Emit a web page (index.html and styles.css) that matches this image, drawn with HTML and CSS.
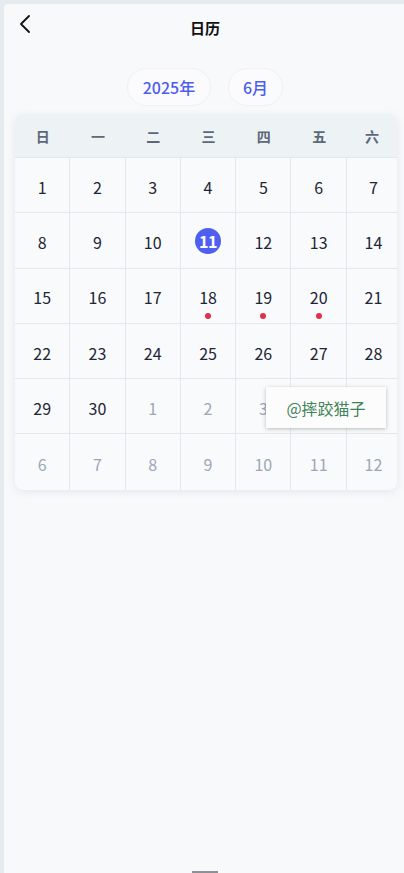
FILE: index.html
```html
<!DOCTYPE html>
<html lang="zh">
<head>
<meta charset="utf-8">
<title>日历</title>
<link rel="stylesheet" href="styles.css">
</head>
<body>
<div class="app">
  <header class="topbar">
    <svg class="back" width="14" height="20" viewBox="0 0 14 20"><path d="M11 2 L3 10 L11 18" fill="none" stroke="#111" stroke-width="1.8" stroke-linecap="round" stroke-linejoin="round"/></svg>
    <h1 class="title">日历</h1>
  </header>
  <div class="pickers">
    <span class="pill pill-year">2025年</span>
    <span class="pill pill-month">6月</span>
  </div>
  <div class="card">
    <div class="week">
      <span>日</span><span>一</span><span>二</span><span>三</span><span>四</span><span>五</span><span>六</span>
    </div>
    <div class="grid">
      <div class="cell">1</div><div class="cell">2</div><div class="cell">3</div><div class="cell">4</div><div class="cell">5</div><div class="cell">6</div><div class="cell">7</div>
      <div class="cell">8</div><div class="cell">9</div><div class="cell">10</div><div class="cell"><span class="today">11</span></div><div class="cell">12</div><div class="cell">13</div><div class="cell">14</div>
      <div class="cell">15</div><div class="cell">16</div><div class="cell">17</div><div class="cell dot">18</div><div class="cell dot">19</div><div class="cell dot">20</div><div class="cell">21</div>
      <div class="cell">22</div><div class="cell">23</div><div class="cell">24</div><div class="cell">25</div><div class="cell">26</div><div class="cell">27</div><div class="cell">28</div>
      <div class="cell">29</div><div class="cell">30</div><div class="cell muted">1</div><div class="cell muted">2</div><div class="cell muted">3</div><div class="cell muted">4</div><div class="cell muted">5</div>
      <div class="cell muted">6</div><div class="cell muted">7</div><div class="cell muted">8</div><div class="cell muted">9</div><div class="cell muted">10</div><div class="cell muted">11</div><div class="cell muted">12</div>
    </div>
    <div class="watermark">@摔跤猫子</div>
  </div>
  <div class="home-bar"></div>
</div>
</body>
</html>
```
FILE: styles.css
```css
* { box-sizing: border-box; }
html, body { margin: 0; padding: 0; }
body {
  background: #e5ebef;
  padding: 4px 0 0 4px;
  font-family: "Noto Sans CJK SC", "Noto Sans", sans-serif;
  width: 404px;
  height: 873px;
  overflow: hidden;
}
.app {
  background: #f8f9fb;
  height: 869px;
  border-top-left-radius: 4px;
  display: flex;
  flex-direction: column;
  position: relative;
}
.topbar {
  height: 44px;
  display: flex;
  align-items: center;
  justify-content: center;
  position: relative;
}
.back {
  position: absolute;
  left: 14px;
  top: 10px;
}
.title {
  margin: 0;
  font-size: 15px;
  font-weight: 700;
  color: #111;
  padding-top: 2px;
  padding-left: 2px;
}
.pickers {
  display: flex;
  justify-content: center;
  gap: 17px;
  margin-top: 20px;
  padding-left: 2px;
}
.pill {
  height: 38px;
  display: flex;
  align-items: center;
  justify-content: center;
  border-radius: 19px;
  background: #fbfbfd;
  border: 1px solid #eff1f5;
  color: #4e5cf0;
  font-size: 16px;
  font-weight: 500;
}
.pill-year { width: 84px; }
.pill-month { width: 55px; }
.card {
  margin: 8px 0 0 11px;
  width: 382px;
  border-radius: 8px;
  background: #f8fafc;
  box-shadow: 0 2px 8px rgba(140, 150, 170, 0.18);
  position: relative;
}
.week {
  height: 44px;
  display: grid;
  grid-template-columns: repeat(6, 55.3px) 1fr;
  align-items: center;
  background: #edf2f4;
  border-top-left-radius: 8px;
  border-top-right-radius: 8px;
  border-bottom: 1px solid #e3e8ee;
}
.week span {
  text-align: center;
  font-size: 14px;
  font-weight: 700;
  color: #5d6879;
}
.grid {
  display: grid;
  grid-template-columns: repeat(6, 55.3px) 1fr;
  grid-auto-rows: 55.3px;
}
.cell {
  display: flex;
  align-items: center;
  justify-content: center;
  padding-top: 3px;
  font-size: 16px;
  color: #1e2533;
  border-right: 1px solid #e3e8ee;
  border-bottom: 1px solid #e3e8ee;
  position: relative;
}
.cell:nth-child(7n) { border-right: none; padding-left: 3px; }
.cell:nth-last-child(-n+7) { border-bottom: none; }
.muted { color: #9ea6b6; }
.today {
  width: 26px;
  height: 26px;
  margin-top: -2px;
  border-radius: 50%;
  background: #4f5ff2;
  color: #fff;
  font-weight: 700;
  display: flex;
  align-items: center;
  justify-content: center;
  font-size: 16px;
  letter-spacing: -0.5px;
}
.dot::after {
  content: "";
  position: absolute;
  width: 6px;
  height: 6px;
  border-radius: 50%;
  background: #e0304a;
  left: 50%;
  bottom: 4px;
  transform: translateX(-50%);
}
.watermark {
  position: absolute;
  left: 251px;
  top: 273px;
  width: 120px;
  height: 41px;
  background: #fcfcfd;
  box-shadow: 0 1px 4px rgba(0, 0, 0, 0.25);
  display: flex;
  align-items: center;
  justify-content: center;
  color: #3f8456;
  font-size: 16px;
}
.home-bar {
  position: absolute;
  bottom: 0;
  left: 188px;
  width: 26px;
  height: 2px;
  background: #8e8e96;
}
```
